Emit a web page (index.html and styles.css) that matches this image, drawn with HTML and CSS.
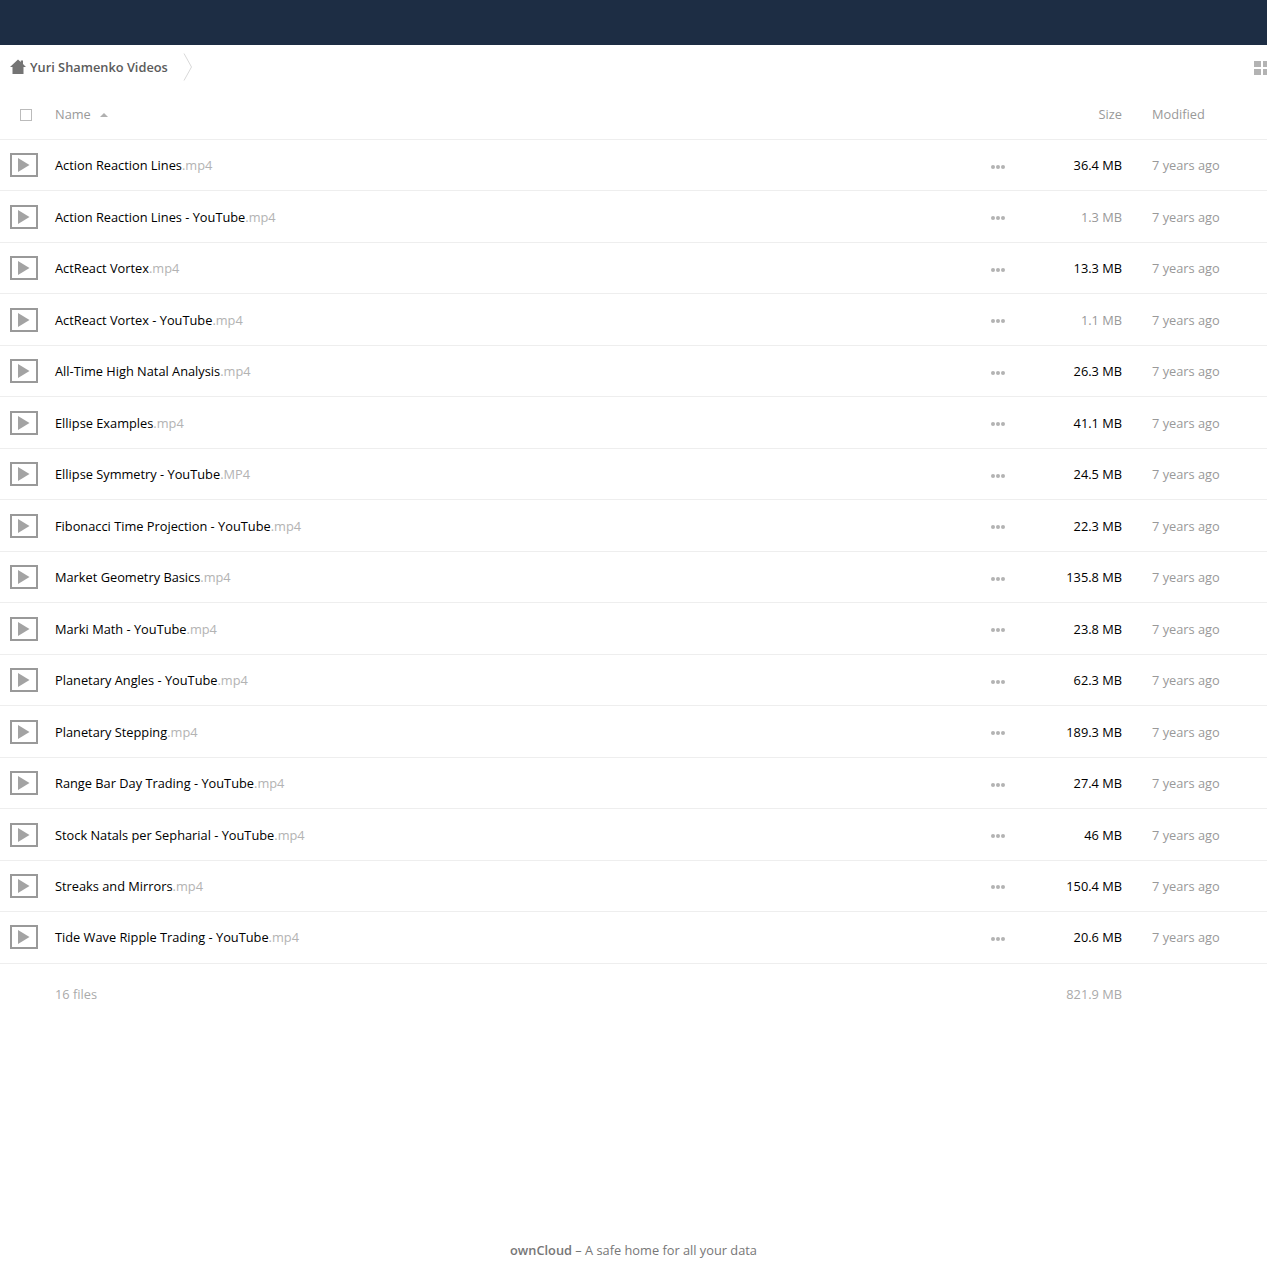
FILE: index.html
```html
<!DOCTYPE html>
<html lang="en">
<head>
<meta charset="utf-8">
<title>Yuri Shamenko Videos - ownCloud</title>
<link rel="stylesheet" href="styles.css">
</head>
<body>
<svg class="sprites" width="0" height="0" aria-hidden="true">
  <symbol id="movie" viewBox="0 0 28 24">
    <path fill="#999" fill-rule="evenodd" d="M0 0h28v24H0zM2 2v20h24V2z"/>
    <path fill="#a3a3a3" d="M8 5 19.500 12 8 19z"/>
  </symbol>
  <symbol id="dots" viewBox="0 0 14 5">
    <circle cx="2" cy="2.500" r="2" fill="#b3b3b3"/><circle cx="7" cy="2.500" r="2" fill="#b3b3b3"/><circle cx="12" cy="2.500" r="2" fill="#b3b3b3"/>
  </symbol>
</svg>
<header class="topbar"></header>
<main class="files">
  <div class="controls">
    <div class="crumb">
      <svg class="home" viewBox="0 0 16 16" width="16" height="16"><path fill="#747474" d="M8 .5 10.800 3V1.500h2.200V5l3 3h-2.500v7h-11V8H0z"/></svg>
      <span class="crumb-name">Yuri Shamenko Videos</span>
      <svg class="crumb-sep" viewBox="0 0 10 28" width="10" height="28"><path fill="none" stroke="#d8d8d8" d="M1 .5 8.500 14 1 27.500"/></svg>
    </div>
    <svg class="view" viewBox="0 0 16 14" width="16" height="14"><path fill="#b3b3b3" d="M0 0h7v6H0zM9 0h7v6H9zM0 8h7v6H0zM9 8h7v6H9z"/></svg>
  </div>
  <div class="row head">
    <div class="c-icon"><span class="check"></span></div>
    <div class="c-name">Name <span class="sort"></span></div>
    <div class="c-size">Size</div>
    <div class="c-date">Modified</div>
  </div>
  <div class="row"><div class="c-icon"><svg class="movie"><use href="#movie"/></svg></div><div class="c-name"><span class="base">Action Reaction Lines</span><span class="ext">.mp4</span></div><svg class="dots"><use href="#dots"/></svg><div class="c-size">36.4 MB</div><div class="c-date">7 years ago</div></div>
  <div class="row"><div class="c-icon"><svg class="movie"><use href="#movie"/></svg></div><div class="c-name"><span class="base">Action Reaction Lines - YouTube</span><span class="ext">.mp4</span></div><svg class="dots"><use href="#dots"/></svg><div class="c-size small">1.3 MB</div><div class="c-date">7 years ago</div></div>
  <div class="row"><div class="c-icon"><svg class="movie"><use href="#movie"/></svg></div><div class="c-name"><span class="base">ActReact Vortex</span><span class="ext">.mp4</span></div><svg class="dots"><use href="#dots"/></svg><div class="c-size">13.3 MB</div><div class="c-date">7 years ago</div></div>
  <div class="row"><div class="c-icon"><svg class="movie"><use href="#movie"/></svg></div><div class="c-name"><span class="base">ActReact Vortex - YouTube</span><span class="ext">.mp4</span></div><svg class="dots"><use href="#dots"/></svg><div class="c-size small">1.1 MB</div><div class="c-date">7 years ago</div></div>
  <div class="row"><div class="c-icon"><svg class="movie"><use href="#movie"/></svg></div><div class="c-name"><span class="base">All-Time High Natal Analysis</span><span class="ext">.mp4</span></div><svg class="dots"><use href="#dots"/></svg><div class="c-size">26.3 MB</div><div class="c-date">7 years ago</div></div>
  <div class="row"><div class="c-icon"><svg class="movie"><use href="#movie"/></svg></div><div class="c-name"><span class="base">Ellipse Examples</span><span class="ext">.mp4</span></div><svg class="dots"><use href="#dots"/></svg><div class="c-size">41.1 MB</div><div class="c-date">7 years ago</div></div>
  <div class="row"><div class="c-icon"><svg class="movie"><use href="#movie"/></svg></div><div class="c-name"><span class="base">Ellipse Symmetry - YouTube</span><span class="ext">.MP4</span></div><svg class="dots"><use href="#dots"/></svg><div class="c-size">24.5 MB</div><div class="c-date">7 years ago</div></div>
  <div class="row"><div class="c-icon"><svg class="movie"><use href="#movie"/></svg></div><div class="c-name"><span class="base">Fibonacci Time Projection - YouTube</span><span class="ext">.mp4</span></div><svg class="dots"><use href="#dots"/></svg><div class="c-size">22.3 MB</div><div class="c-date">7 years ago</div></div>
  <div class="row"><div class="c-icon"><svg class="movie"><use href="#movie"/></svg></div><div class="c-name"><span class="base">Market Geometry Basics</span><span class="ext">.mp4</span></div><svg class="dots"><use href="#dots"/></svg><div class="c-size">135.8 MB</div><div class="c-date">7 years ago</div></div>
  <div class="row"><div class="c-icon"><svg class="movie"><use href="#movie"/></svg></div><div class="c-name"><span class="base">Marki Math - YouTube</span><span class="ext">.mp4</span></div><svg class="dots"><use href="#dots"/></svg><div class="c-size">23.8 MB</div><div class="c-date">7 years ago</div></div>
  <div class="row"><div class="c-icon"><svg class="movie"><use href="#movie"/></svg></div><div class="c-name"><span class="base">Planetary Angles - YouTube</span><span class="ext">.mp4</span></div><svg class="dots"><use href="#dots"/></svg><div class="c-size">62.3 MB</div><div class="c-date">7 years ago</div></div>
  <div class="row"><div class="c-icon"><svg class="movie"><use href="#movie"/></svg></div><div class="c-name"><span class="base">Planetary Stepping</span><span class="ext">.mp4</span></div><svg class="dots"><use href="#dots"/></svg><div class="c-size">189.3 MB</div><div class="c-date">7 years ago</div></div>
  <div class="row"><div class="c-icon"><svg class="movie"><use href="#movie"/></svg></div><div class="c-name"><span class="base">Range Bar Day Trading - YouTube</span><span class="ext">.mp4</span></div><svg class="dots"><use href="#dots"/></svg><div class="c-size">27.4 MB</div><div class="c-date">7 years ago</div></div>
  <div class="row"><div class="c-icon"><svg class="movie"><use href="#movie"/></svg></div><div class="c-name"><span class="base">Stock Natals per Sepharial - YouTube</span><span class="ext">.mp4</span></div><svg class="dots"><use href="#dots"/></svg><div class="c-size">46 MB</div><div class="c-date">7 years ago</div></div>
  <div class="row"><div class="c-icon"><svg class="movie"><use href="#movie"/></svg></div><div class="c-name"><span class="base">Streaks and Mirrors</span><span class="ext">.mp4</span></div><svg class="dots"><use href="#dots"/></svg><div class="c-size">150.4 MB</div><div class="c-date">7 years ago</div></div>
  <div class="row"><div class="c-icon"><svg class="movie"><use href="#movie"/></svg></div><div class="c-name"><span class="base">Tide Wave Ripple Trading - YouTube</span><span class="ext">.mp4</span></div><svg class="dots"><use href="#dots"/></svg><div class="c-size">20.6 MB</div><div class="c-date">7 years ago</div></div>
  <div class="row summary">
    <div class="c-icon"></div>
    <div class="c-name">16 files</div>
    <div class="c-size">821.9 MB</div>
    <div class="c-date"></div>
  </div>
</main>
<footer class="foot"><b>ownCloud</b> – A safe home for all your data</footer>
</body>
</html>
```
FILE: styles.css
```css
* { box-sizing: border-box; }
html, body { margin: 0; height: 100%; }
body {
  display: flex;
  flex-direction: column;
  min-height: 1280px;
  background: #fff;
  color: #000;
  font: 12.8px/18px "Open Sans", sans-serif;
}
.sprites { position: absolute; }
.topbar { height: 45px; flex: none; background: #1d2d44; }
.files { flex: 1; }
.controls {
  height: 44px;
  display: flex;
  align-items: center;
  justify-content: space-between;
  overflow: hidden;
}
.crumb { display: flex; align-items: center; padding-left: 10px; }
.crumb-name { margin-left: 4px; font-weight: 600; color: #5b5b5b; }
.crumb-sep { margin-left: 15px; }
.view { margin: 2px -3px 0 0; }
.row {
  display: flex;
  align-items: center;
  height: 51.5px;
  border-bottom: 1px solid #eee;
}
.row:nth-last-child(3) { height: 51.2px; }
.head { height: 50.9px; color: #999; }
.c-icon { width: 55px; padding-left: 10px; display: flex; flex: none; }
.movie { width: 28px; height: 24px; display: block; }
.check {
  width: 12px;
  height: 12px;
  margin-left: 10px;
  margin-top: 2px;
  border: 1px solid #bbb;
  background: #fff;
}
.c-name { flex: 1; min-width: 0; }
.base { color: #000; }
.ext { color: #b3b3b3; }
.sort {
  display: inline-block;
  width: 0;
  height: 0;
  margin-left: 6px;
  vertical-align: 2px;
  border: 4px solid transparent;
  border-top-width: 0;
  border-bottom: 4px solid #b0b0b0;
}
.dots { width: 14px; height: 5px; margin-right: 17px; flex: none; transform: translateY(1.500px); }
.c-size { width: 100px; text-align: right; flex: none; }
.c-name + .c-size { width: 174px; }
.small { color: #999; }
.c-date { width: 145px; padding-left: 30px; color: #999; flex: none; }
.summary { height: 60.500px; border-bottom: 0; color: #aaa; }
.foot {
  flex: none;
  height: 60px;
  padding-top: 21px;
  text-align: center;
  color: #777;
}
.foot b { font-weight: 600; }
```
